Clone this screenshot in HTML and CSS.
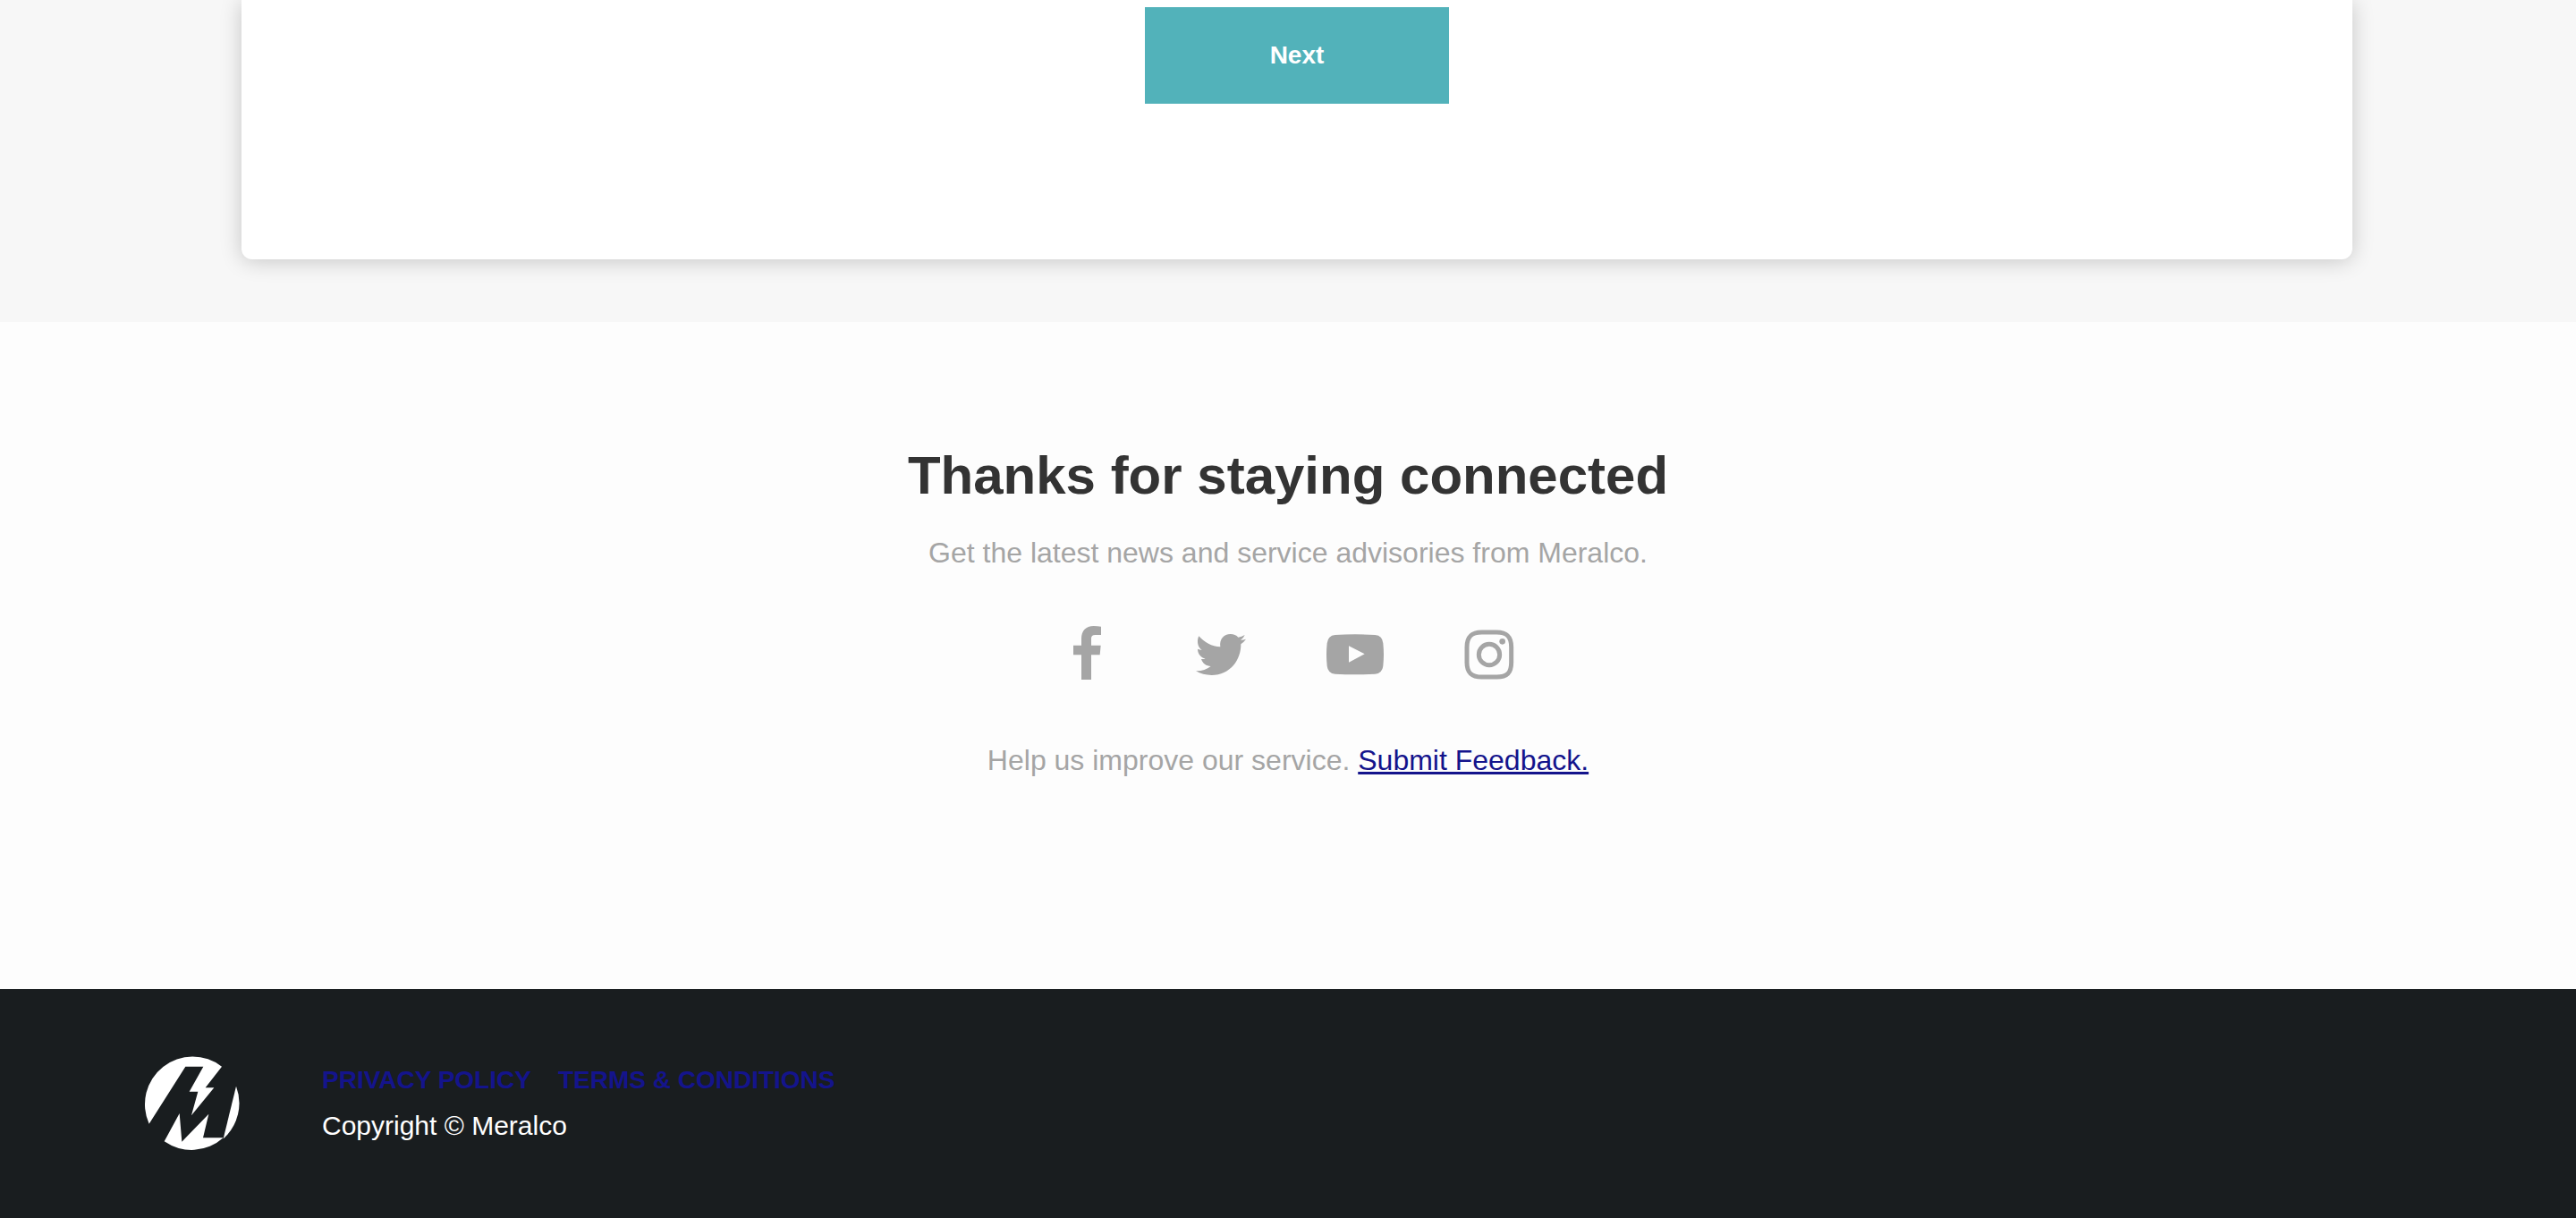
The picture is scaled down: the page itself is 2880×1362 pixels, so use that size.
FILE: index.html
```html
<!DOCTYPE html>
<html lang="en">
<head>
<meta charset="utf-8">
<meta name="viewport" content="width=device-width, initial-scale=1">
<title>Meralco</title>
<link rel="stylesheet" href="styles.css">
</head>
<body>
<main class="form-area">
  <form class="card">
    <button class="next" type="button">Next</button>
  </form>
</main>
<section class="connect">
  <h2 class="connect-title">Thanks for staying connected</h2>
  <p class="connect-text">Get the latest news and service advisories from Meralco.</p>
  <nav class="social" aria-label="Social media">
    <a class="social-link" href="#" aria-label="Facebook">
      <svg class="social-icon" viewBox="39 60 192 180"><path d="M117 240V157H90V125H117V102C117 76 132 60 158 60Q172 60 183 62V90H163Q150 90 150 102V125H182L179 157H150V240Z"/></svg>
    </a>
    <a class="social-link" href="#" aria-label="Twitter">
      <svg class="social-icon" viewBox="489 60 192 180"><path d="M511 94C530 115 554 129 583 130C579 104 595 87 617 87C628 87 637 91 643 98Q655 96 665 90Q661 101 651 107Q661 107 669 104Q662 114 652 121C653 174 616 225 554 225C534 225 516 220 501 211Q530 212 551 195C536 194 524 186 519 171Q526 172 533 170C518 166 507 153 507 137Q514 140 521 141C507 131 503 110 511 94Z"/></svg>
    </a>
    <a class="social-link" href="#" aria-label="YouTube">
      <svg class="social-icon" viewBox="69 60 192 180"><path fill-rule="evenodd" d="M98 90Q165 86 232 90Q257 92 259 118Q263 156 259 194Q256 219 232 221Q165 225 98 221Q74 219 71 194Q67 156 71 118Q74 92 98 90ZM144 127V182L197 154Z"/></svg>
    </a>
    <a class="social-link" href="#" aria-label="Instagram">
      <svg class="social-icon" viewBox="519 60 192 180"><path fill="none" stroke="#a5a5a5" stroke-width="15" d="M590 81H640C675 81 689 96 689 131V182C689 217 675 231 640 231H590C555 231 540 217 540 182V131C540 96 555 81 590 81Z"/><circle cx="615" cy="156" r="35" fill="none" stroke="#a5a5a5" stroke-width="15"/><circle cx="659" cy="112" r="10"/></svg>
    </a>
  </nav>
  <p class="connect-text">Help us improve our service. <a class="feedback" href="#">Submit Feedback.</a></p>
</section>
<footer class="footer">
  <svg class="logo" viewBox="65 58 321 321" role="img" aria-label="Meralco">
    <path fill="#fff" d="M82 288A160 160 0 0 1 326 96L271 167H300L224 260L246 180H217L264 96H204Z"/>
    <path fill="#fff" d="M184 253L192 348L282 255L263 335H331A160 160 0 0 1 133 347Z"/>
    <path fill="#fff" d="M374 162A160 160 0 0 1 331 338Z"/>
  </svg>
  <div class="legal">
    <nav class="legal-links" aria-label="Legal">
      <a class="legal-link" href="#">PRIVACY POLICY</a>
      <a class="legal-link" href="#">TERMS &amp; CONDITIONS</a>
    </nav>
    <p class="copyright">Copyright © Meralco</p>
  </div>
</footer>
</body>
</html>
```
FILE: styles.css
```css
* {
  box-sizing: border-box;
}

body {
  margin: 0;
  background: #fdfdfd;
  font-family: "Liberation Sans", Arial, sans-serif;
}

.form-area {
  padding: 0 250px 70px 270px;
  background: #f7f7f7;
  overflow: hidden;
}

.card {
  display: flex;
  justify-content: center;
  padding: 8px 40px 174px;
  background: #fff;
  border-radius: 0 0 12px 12px;
  box-shadow: 0 2px 24px rgba(0, 0, 0, 0.2);
}

.next {
  padding: 36px 140px;
  border: 0;
  background: #52b2ba;
  color: #fff;
  font-family: inherit;
  font-size: 28px;
  font-weight: 700;
  line-height: 36px;
}

.connect {
  padding: 136px 40px 236px;
  text-align: center;
}

.connect-title {
  margin: 0 0 30px;
  color: #333;
  font-size: 60px;
  line-height: 72px;
}

.connect-text {
  margin: 0;
  color: #a5a5a5;
  font-size: 32px;
  line-height: 40px;
}

.social {
  display: flex;
  justify-content: center;
  gap: 86px;
  margin: 62px 0 70px;
}

.social-icon {
  display: block;
  width: 64px;
  height: 60px;
  fill: #a5a5a5;
}

.feedback {
  color: #14148c;
  text-decoration-thickness: 3px;
}

.footer {
  display: flex;
  align-items: center;
  gap: 92px;
  padding: 74px 161px 75px;
  background: #191d1f;
}

.logo {
  width: 107px;
  height: 107px;
}

.legal {
  display: grid;
  gap: 15px;
}

.legal-links {
  display: flex;
  gap: 30px;
}

.legal-link {
  color: #14148c;
  font-size: 28px;
  font-weight: 700;
  line-height: 36px;
  text-decoration: none;
}

.copyright {
  margin: 0;
  color: #fff;
  font-size: 30px;
  line-height: 36px;
}
```
